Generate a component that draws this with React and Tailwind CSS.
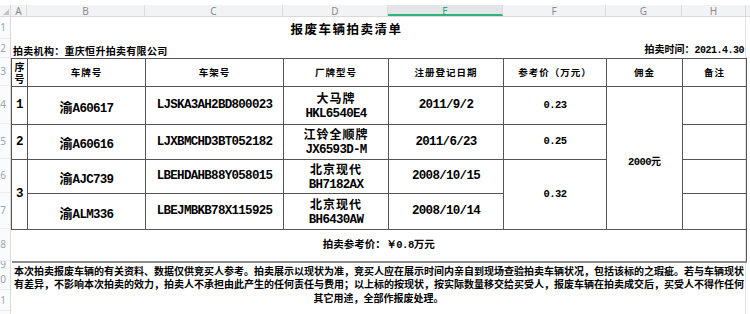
import React from "react";

const mono = "font-['Liberation_Mono',monospace] text-[12.5px] tracking-[-0.7px]";
const monoSm = "font-['Liberation_Mono',monospace] text-[10.5px] tracking-[-0.5px]";
const cell = "border border-[#555] text-center align-middle p-0";

const columns = [
  { letter: "A", width: "w-[16px]" },
  { letter: "B", width: "w-[118px]" },
  { letter: "C", width: "w-[138px]" },
  { letter: "D", width: "w-[105px]" },
  { letter: "E", width: "w-[115px]", active: true },
  { letter: "F", width: "w-[103px]" },
  { letter: "G", width: "w-[76px]" },
  { letter: "H", width: "w-[64px]" },
];

const rowHeads = [
  { n: "1", h: "h-[22px]" },
  { n: "2", h: "h-[19px]" },
  { n: "3", h: "h-[28px]" },
  { n: "4", h: "h-[38px]" },
  { n: "5", h: "h-[35px]" },
  { n: "6", h: "h-[34px]" },
  { n: "7", h: "h-[36px]" },
  { n: "8", h: "h-[32px]" },
  { n: "9", h: "h-[8px]" },
  { n: "10", h: "h-[21px]" },
  { n: "11", h: "h-[21px]" },
  { n: "12", h: "h-[20px]" },
];

const headers = ["车牌号", "车架号", "厂牌型号", "注册登记日期", "参考价（万元）", "佣金", "备注"];

function ColumnHeader() {
  return (
    <div className="flex h-[12px] bg-[#f2f3f5] border-b border-[#d9d9d9] text-[10px] leading-[12px] text-[#8a8a8a] font-['Noto_Sans',sans-serif]">
      <div className="w-[11px] flex items-end justify-end border-r border-[#d9d9d9] p-[1px]">
        <div className="w-0 h-0 border-l-[6px] border-l-transparent border-b-[6px] border-b-[#c4c4c4]" />
      </div>
      {columns.map((c) => (
        <div key={c.letter} className={`${c.width} shrink-0 text-center border-r border-[#dcdcdc] ${c.active ? "bg-[#e3e5e9] text-[#27a873] border-b-2 border-b-[#2fb57c]" : ""}`}>
          {c.letter}
        </div>
      ))}
    </div>
  );
}

function RowHeader() {
  return (
    <div className="w-[11px] shrink-0 border-r border-[#d9d9d9] bg-[#fafbfc] overflow-hidden font-['Noto_Sans',sans-serif] text-[10px] text-[#9aa4b1]">
      {rowHeads.map((r) => (
        <div key={r.n} className={`${r.h} flex items-center justify-end pr-[4px] border-b border-[#eceef1] overflow-hidden whitespace-nowrap`}>
          {r.n}
        </div>
      ))}
    </div>
  );
}

function Brand({ name, model }) {
  return (
    <div className="flex flex-col items-center leading-[16px]">
      <span className="text-[12px] tracking-[1px] font-bold">{name}</span>
      <span className={`${mono} font-bold`}>{model}</span>
    </div>
  );
}

function Plate({ text }) {
  return (
    <span className="font-bold">
      <span className="text-[13px]">渝</span>
      <span className={mono}>{text}</span>
    </span>
  );
}

export default function App() {
  return (
    <div className="w-[750px] h-[314px] overflow-hidden bg-white text-black font-['Noto_Sans_CJK_SC','Noto_Sans',sans-serif]">
      <div className="h-[5px]" />
      <ColumnHeader />
      <div className="flex">
        <RowHeader />
        <div className="w-[735px] shrink-0 border-r border-[#e2e2e2]">
          <div className="h-[22px] w-[671px] flex items-center justify-center pt-[3px]">
            <span className="text-[12.5px] tracking-[1.5px] font-bold">报废车辆拍卖清单</span>
          </div>
          <div className="h-[19px] flex items-end justify-between pl-[2px] pr-[1px] pb-[1px] text-[10px] font-bold leading-[13px]">
            <span className="tracking-[0.3px]">拍卖机构：重庆恒升拍卖有限公司</span>
            <span>
              拍卖时间：<span className="font-['Liberation_Mono',monospace] text-[10px] tracking-[-0.5px]">2021.4.30</span>
            </span>
          </div>
          <table className="border-collapse table-fixed w-[735px] font-bold">
            <colgroup>
              {columns.map((c) => (
                <col key={c.letter} className={c.width} />
              ))}
            </colgroup>
            <tbody>
              <tr className="h-[28px]">
                <td className={`${cell} text-[10px] leading-[12px]`}>
                  序<br />号
                </td>
                {headers.map((h) => (
                  <td key={h} className={`${cell} text-[9.5px] tracking-[1px]`}>
                    {h}
                  </td>
                ))}
              </tr>
              <tr className="h-[38px]">
                <td className={`${cell} ${mono}`}>1</td>
                <td className={cell}><Plate text="A60617" /></td>
                <td className={`${cell} ${mono}`}>LJSKA3AH2BD800023</td>
                <td className={cell}><Brand name="大马牌" model="HKL6540E4" /></td>
                <td className={`${cell} ${mono}`}>2011/9/2</td>
                <td className={`${cell} ${monoSm}`}>0.23</td>
                <td rowSpan={4} className={cell}>
                  <span className={monoSm}>2000</span>
                  <span className="text-[10px]">元</span>
                </td>
                <td className={cell}></td>
              </tr>
              <tr className="h-[35px]">
                <td className={`${cell} ${mono}`}>2</td>
                <td className={cell}><Plate text="A60616" /></td>
                <td className={`${cell} ${mono}`}>LJXBMCHD3BT052182</td>
                <td className={cell}><Brand name="江铃全顺牌" model="JX6593D-M" /></td>
                <td className={`${cell} ${mono}`}>2011/6/23</td>
                <td className={`${cell} ${monoSm}`}>0.25</td>
                <td className={cell}></td>
              </tr>
              <tr className="h-[34px]">
                <td rowSpan={2} className={`${cell} ${mono}`}>3</td>
                <td className={cell}><Plate text="AJC739" /></td>
                <td className={`${cell} ${mono}`}>LBEHDAHB88Y058015</td>
                <td className={cell}><Brand name="北京现代" model="BH7182AX" /></td>
                <td className={`${cell} ${mono}`}>2008/10/15</td>
                <td rowSpan={2} className={`${cell} ${monoSm}`}>0.32</td>
                <td className={cell}></td>
              </tr>
              <tr className="h-[36px]">
                <td className={cell}><Plate text="ALM336" /></td>
                <td className={`${cell} ${mono}`}>LBEJMBKB78X115925</td>
                <td className={cell}><Brand name="北京现代" model="BH6430AW" /></td>
                <td className={`${cell} ${mono}`}>2008/10/14</td>
                <td className={cell}></td>
              </tr>
              <tr className="h-[32px]">
                <td colSpan={8} className="border-l-0 border-r border-t border-[#555] border-b-2 border-b-[#8c8c8c] text-center align-middle text-[10.5px]">
                  拍卖参考价：<span className="font-['Liberation_Mono',monospace] tracking-[-0.5px]">￥0.8</span>万元
                </td>
              </tr>
            </tbody>
          </table>
          <div className="h-[50px] pt-[1px] pl-[3px] pr-[2px] text-[10px] leading-[13.5px] font-bold">
            <div className="text-justify [text-align-last:justify] whitespace-nowrap">
              本次拍卖报废车辆的有关资料、数据仅供竞买人参考。拍卖展示以现状为准，竞买人应在展示时间内亲自到现场查验拍卖车辆状况，包括该标的之瑕疵。若与车辆现状
            </div>
            <div className="text-justify [text-align-last:justify] whitespace-nowrap">
              有差异，不影响本次拍卖的效力，拍卖人不承担由此产生的任何责任与费用；以上标的按现状，按实际数量移交给买受人，报废车辆在拍卖成交后，买受人不得作任何
            </div>
            <div className="text-center">其它用途，全部作报废处理。</div>
          </div>
        </div>
      </div>
    </div>
  );
}
